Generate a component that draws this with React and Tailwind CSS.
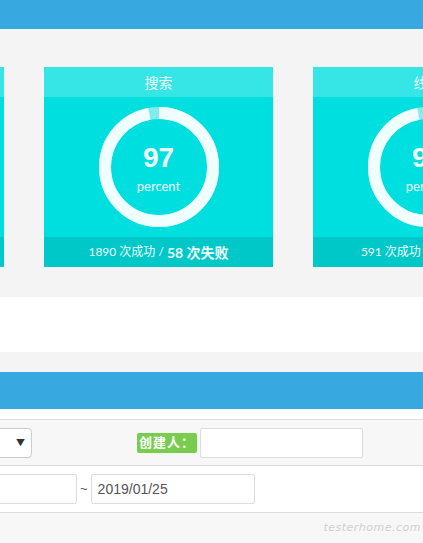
import React from "react";

const CJK = { fontFamily: "Lato, 'Noto Sans CJK SC', sans-serif" };

function Ring({ value }) {
  const c = 2 * Math.PI * 54;
  return (
    <div className="relative h-[120px] w-[120px]">
      <svg width="120" height="120" viewBox="0 0 120 120">
        <circle cx="60" cy="60" r="54" fill="none" stroke="#80eded" strokeWidth="12" />
        <circle
          cx="60"
          cy="60"
          r="54"
          fill="none"
          stroke="#f0ffff"
          strokeWidth="12"
          strokeDasharray={`${(c * value) / 100} ${c}`}
          transform="rotate(-90 60 60)"
        />
      </svg>
      <div className="absolute inset-0 flex flex-col items-center justify-center text-[#f0ffff]">
        <span
          className="mt-[2px] text-[28px] font-bold leading-none"
          style={{ fontFamily: "'Liberation Sans', Arial, sans-serif" }}
        >
          {value}
        </span>
        <span className="mt-[8px] text-[13px] leading-none">percent</span>
      </div>
    </div>
  );
}

function StatCard({ title, value, ok, fail }) {
  return (
    <div className="w-[229px] shrink-0 text-[#f0ffff]" style={CJK}>
      <div className="flex h-[30px] items-center justify-center bg-[#36e6e6] text-[14px]">{title}</div>
      <div className="flex h-[140px] items-center justify-center bg-[#00dfdf]">
        <Ring value={value} />
      </div>
      <div className="flex h-[30px] items-center justify-center whitespace-nowrap bg-[#00c8c8] text-[12px]">
        {ok} 次成功 /&nbsp;<span className="text-[14px] font-bold">{fail} 次失败</span>
      </div>
    </div>
  );
}

export default function App() {
  return (
    <div className="h-[543px] w-[423px] overflow-hidden bg-white" style={CJK}>
      <div className="h-[29px] bg-[#38a9e0]" />
      <div className="h-[268px] overflow-hidden bg-[#f4f4f4] pt-[38px]">
        <div className="ml-[-225px] flex gap-[40px]">
          <StatCard title="上传" value={98} ok={2204} fail={41} />
          <StatCard title="搜索" value={97} ok={1890} fail={58} />
          <StatCard title="线上" value={97} ok={591} fail={17} />
        </div>
      </div>
      <div className="h-[55px] bg-white" />
      <div className="h-[20px] bg-[#f4f4f4]" />
      <div className="h-[37px] bg-[#38a9e0]" />
      <div className="h-[10px] bg-white" />
      <div className="flex h-[47px] items-center border-y border-[#dddddd] bg-[#f7f7f7]">
        <div className="ml-[-68px] flex h-[30px] w-[100px] items-center justify-end rounded-[4px] border border-[#cccccc] bg-white pr-[6px]">
          <span className="text-[9px] text-[#333]">▼</span>
        </div>
        <div className="ml-[105px] flex h-[20px] w-[60px] items-center justify-center rounded-[2px] bg-[#78cd4f] text-[13px] font-bold tracking-[1px] text-white">
          创建人：
        </div>
        <div className="ml-[3px] h-[30px] w-[163px] rounded-[2px] border border-[#dddddd] bg-white" />
      </div>
      <div className="flex h-[47px] items-center border-b border-[#dddddd] bg-white">
        <div className="ml-[-23px] h-[30px] w-[100px] rounded-[2px] border border-[#dddddd] bg-white" />
        <span className="mx-[3px] text-[13px] text-[#555]" style={{ fontFamily: "'Liberation Sans', sans-serif" }}>~</span>
        <div
          className="flex h-[30px] w-[164px] items-center rounded-[2px] border border-[#dddddd] bg-white pl-[6px] text-[14px] text-[#555]"
          style={{ fontFamily: "'Liberation Sans', sans-serif" }}
        >
          2019/01/25
        </div>
      </div>
      <div className="flex h-[30px] items-center justify-end bg-[#f7f7f7] pr-[2px]">
        <span className="text-[11px] italic tracking-[0.5px] text-[#d0d0d0]" style={{ fontFamily: "'DejaVu Sans', sans-serif" }}>
          testerhome.com
        </span>
      </div>
    </div>
  );
}
